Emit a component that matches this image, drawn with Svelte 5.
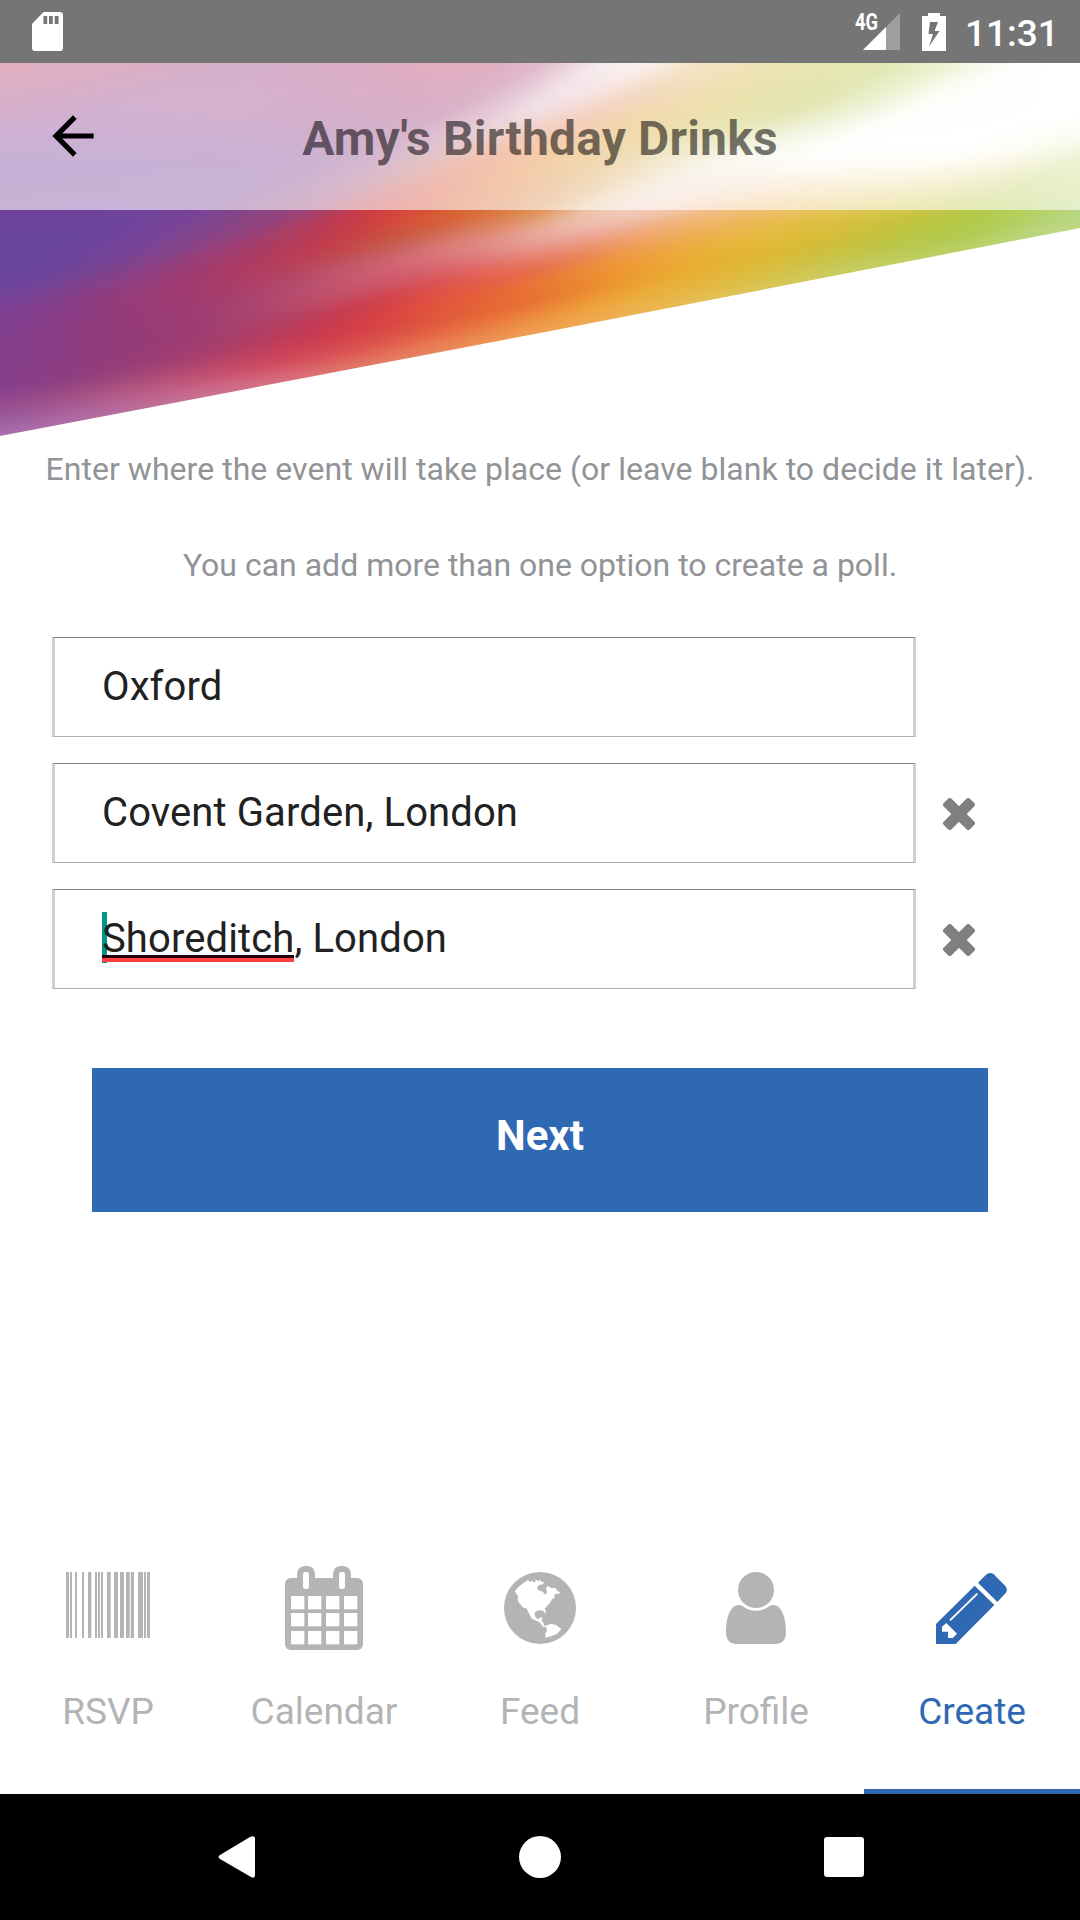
<script>
  // Colour samples of the hero artwork: y position, rise of the streaks below it, then [x, colour] stops.
  const rows = [
    [63, 0.58, [[0, 'b93761'], [150, 'a7396b'], [250, '96397f'], [350, 'a53470'], [450, 'b9325f'], [510, 'b33c68'], [550, 'b55a80'], [600, 'ebcdd7'], [650, 'f5deda'], [700, 'e6be75'], [800, 'cdbe3e'], [900, 'b4c846'], [950, 'd2e08c'], [1020, 'fcfef9'], [1080, 'ffffff']]],
    [110, 0.5, [[0, '9b397d'], [100, '903c8c'], [200, '964087'], [300, '983a80'], [400, '9e3873'], [450, 'a53c76'], [500, 'c47fa0'], [530, 'd9b4c0'], [560, 'e6a8a8'], [600, 'e38e61'], [680, 'dcaa2f'], [750, 'c0bb34'], [800, 'b9be41'], [860, 'd4e19d'], [910, 'fafcf4'], [1080, 'ffffff']]],
    [155, 0.5, [[0, '783c9b'], [150, '783c99'], [300, '7f3e8f'], [350, '8a4489'], [400, 'a35a89'], [450, 'c57060'], [500, 'e66a35'], [560, 'e38f26'], [620, 'dcab44'], [680, 'e1cf91'], [740, 'f3f1dc'], [820, 'ffffff'], [940, 'ffffff'], [1000, 'fcf7e6'], [1080, 'dce39f']]],
    [212, 0.36, [[0, '70429a'], [100, '6e449c'], [200, '78439a'], [260, '8a457f'], [300, '98437a'], [340, 'b73b55'], [360, 'c83a46'], [400, 'd6433a'], [440, 'db5a33'], [480, 'dc6b38'], [540, 'e09254'], [580, 'ecc2a0'], [620, 'f1cfbe'], [660, 'f2c7b0'], [700, 'f1bd88'], [760, 'eebb66'], [820, 'e3c150'], [880, 'd5c344'], [940, 'bfc541'], [980, 'b0c843'], [1020, 'b3cf57'], [1080, 'b7d684']]],
    [240, 0.32, [[0, '67459a'], [70, '68459c'], [140, '78449a'], [200, '86448a'], [250, 'a04072'], [300, 'b33b58'], [340, 'c83c48'], [380, 'c85040'], [420, 'cb6558'], [460, 'de8078'], [500, 'e29488'], [540, 'e9a8a0'], [580, 'eca090'], [620, 'f0a070'], [680, 'efac50'], [740, 'e6b83c'], [800, 'dcbb36'], [860, 'c8c03c'], [900, 'bac544'], [960, 'b0ca50'], [1020, 'bdd67c'], [1080, 'c5dc90']]],
    [270, 0.32, [[0, '67459b'], [60, '69459a'], [100, '7a4392'], [150, '8d4083'], [200, 'a03b70'], [250, 'b03a62'], [300, 'b94560'], [340, 'c0566c'], [380, 'd06070'], [420, 'd76070'], [460, 'de6060'], [500, 'e56a58'], [540, 'e66a48'], [580, 'ee8a38'], [640, 'eda030'], [700, 'e7b030'], [760, 'dcbc3c'], [800, 'cfc44c'], [840, 'c8cc60'], [1080, 'c8dc90']]],
    [300, 0.32, [[0, '75449c'], [50, '82418f'], [100, '903c80'], [150, '9a3b74'], [200, 'a03a70'], [250, 'aa4270'], [300, 'b84c6c'], [340, 'c44a60'], [380, 'd03c48'], [420, 'de4c40'], [460, 'e55c38'], [500, 'e66830'], [540, 'e87030'], [600, 'eea034'], [640, 'ecb044'], [720, 'e2c458'], [860, 'd0d070']]],
    [330, 0.3, [[0, '803f94'], [60, '8a3f86'], [120, '953a78'], [180, '993a74'], [240, 'a73f6c'], [300, 'bf3a58'], [340, 'd03848'], [400, 'dc4c44'], [440, 'e56440'], [500, 'ec8a48'], [540, 'f0a050'], [640, 'ecb85c']]],
    [360, 0.25, [[0, '82408f'], [60, '8a3e84'], [120, '963a78'], [180, 'a03f72'], [240, 'bf4464'], [280, 'cf4458'], [340, 'dd5c5c'], [380, 'e47860'], [460, 'ec9860']]],
    [390, 0.22, [[0, '82408f'], [60, '95457f'], [120, 'b05880'], [180, 'c46288'], [220, 'd07090'], [340, 'dd7878']]],
    [420, 0.2, [[0, '9455a0'], [50, 'aa68a4'], [140, 'b878a4']]],
    [440, 0.2, [[0, 'a870ac'], [80, 'b078a8']]]
  ].map(([y, slope, stops]) => [y, slope, stops.map(([x, hex]) => [x, [0, 2, 4].map((i) => parseInt(hex.slice(i, i + 2), 16))])]);

  const TOP = 63;
  const STRIP = 3;

  const mix = (a, b, t) => a.map((v, i) => v + (b[i] - v) * t);

  function along(stops, x) {
    if (x <= stops[0][0]) return stops[0][1];
    for (let i = 1; i < stops.length; i++) {
      if (x <= stops[i][0]) {
        const [x0, c0] = stops[i - 1];
        const [x1, c1] = stops[i];
        return mix(c0, c1, (x - x0) / (x1 - x0));
      }
    }
    return stops[stops.length - 1][1];
  }

  function colorAt(x, y) {
    let i = 1;
    while (i < rows.length - 1 && rows[i][0] < y) i++;
    const [y0, slope, r0] = rows[i - 1];
    const [y1, , r1] = rows[i];
    const c0 = along(r0, x + (y - y0) / slope);
    const c1 = along(r1, x - (y1 - y) / slope);
    return mix(c0, c1, (y - y0) / (y1 - y0));
  }

  // Averages neighbouring points along y so the rows blend softly; the header edge stays crisp.
  function softColor(x, y) {
    const taps = [-10, -5, 0, 5, 10].map((d) => colorAt(x - d * 1.5, Math.max(TOP, y + d)));
    const c = [0, 1, 2].map((k) => Math.round(taps.reduce((s, t) => s + t[k], 0) / taps.length));
    return `rgb(${c.join(' ')})`;
  }

  const strips = Array.from({ length: 125 }, (_, n) => {
    const y = TOP + n * STRIP + STRIP / 2;
    const stops = Array.from({ length: 55 }, (_, k) => softColor(k * 20, y) + ` ${k * 20}px`);
    return `linear-gradient(90deg, ${stops.join(', ')})`;
  });

  const places = [
    { text: 'Oxford', removable: false },
    { text: 'Covent Garden, London', removable: true },
    { marked: 'Shoreditch', text: ', London', removable: true }
  ];

  const bars = [[108, 9], [120, 6], [135, 6], [156, 6], [174, 10], [195, 6], [204, 6], [213, 6], [231, 11], [252, 12], [270, 12], [288, 11], [302, 10], [324, 15], [342, 6], [351, 9]];

  const cells = [168, 219, 273].flatMap((y) => [783, 834, 888, 942].map((x) => [x, y]));
</script>

<div class="screen">
  <div class="status">
    <svg class="sd" viewBox="0 0 31 39"><path fill="#fff" fill-rule="evenodd" d="M11.500 0H28a3 3 0 0 1 3 3v33a3 3 0 0 1-3 3H3a3 3 0 0 1-3-3V12zM11.500 4v8h3.700V4zm5.500 0v8h3.800V4zm5.700 0v8h3.800V4z" /></svg>
    <div class="right">
      <div class="signal">
        <svg viewBox="0 0 37 37"><path fill="#9f9f9f" d="M37 0v37H0z" /><path fill="#fff" d="M23 14v23H0z" /></svg>
        <span>4G</span>
      </div>
      <svg class="battery" viewBox="0 0 24 38"><path fill="#fff" fill-rule="evenodd" d="M6 0h12v3h6v35H0V3h6zM8 9L6.500 21h4.500L7 33.500 17.500 18H12.500L16 9z" /></svg>
      <span class="time">11:31</span>
    </div>
  </div>

  <div class="hero">
    <div class="art" aria-hidden="true">
      {#each strips as s}<div class="strip" style:background={s}></div>{/each}
    </div>
    <header>
      <svg class="back" viewBox="0 0 24 24"><path d="M20 11H7.830l5.590-5.590L12 4l-8 8 8 8 1.410-1.410L7.830 13H20z" /></svg>
      <h1>Amy's Birthday Drinks</h1>
    </header>
  </div>

  <main>
    <p class="hint first">Enter where the event will take place (or leave blank to decide it later).</p>
    <p class="hint">You can add more than one option to create a poll.</p>
    <div class="places">
      {#each places as p}
        <div class="place">
          <div class="field">
            {#if p.marked}<span class="marked">{p.marked}<i class="caret"></i></span>{/if}<span>{p.text}</span>
          </div>
          {#if p.removable}
            <svg class="remove" viewBox="-16 -16 32 32"><g transform="rotate(45)"><rect x="-18.500" y="-5.500" width="37" height="11" rx="2.500" /><rect x="-5.500" y="-18.500" width="11" height="37" rx="2.500" /></g></svg>
          {/if}
        </div>
      {/each}
    </div>
    <button class="next">Next</button>
  </main>

  <nav class="tabs">
    <div class="tab">
      <svg viewBox="99 69 270 270">{#each bars as [x, w]}<rect {x} y="96" width={w} height="198" />{/each}</svg>
      <span>RSVP</span>
    </div>
    <div class="tab">
      <svg viewBox="747 69 270 270">
        <rect x="765" y="114" width="234" height="216" rx="17" />
        <rect x="801" y="78" width="54" height="90" rx="24" />
        <rect x="909" y="78" width="54" height="90" rx="24" />
        <g fill="#fff">
          <rect x="819" y="96" width="18" height="51" rx="7" />
          <rect x="927" y="96" width="18" height="51" rx="7" />
          {#each cells as [x, y]}<rect {x} {y} width="40" height="40" />{/each}
        </g>
      </svg>
      <span>Calendar</span>
    </div>
    <div class="tab">
      <svg viewBox="75 69 270 270">
        <circle cx="210" cy="204" r="108" />
        <path fill="#fff" d="M134 154L146 140L163 127L174 121L182 126L188 121L190 127L197 126L196 117L205 124L211 120L216 127L223 125L219 133L206 136L201 143L204 150L218 155L226 164L231 157L228 147L232 137L244 144L256 144L262 152L273 159L256 163L252 168L256 172L246 178L240 188L233 196L224 206L228 214L226 222L221 213L208 211L197 214L194 223L197 233L205 238L211 232L218 233L214 244L220 247L222 258L232 256L243 251L258 255L274 266L262 281L246 288L226 293L226 281L231 272L229 262L219 260L209 247L195 241L184 235L178 222L169 205L160 203L148 190L143 180L144 168L138 160Z" />
      </svg>
      <span>Feed</span>
    </div>
    <div class="tab">
      <svg viewBox="723 69 270 270">
        <path d="M808 195C780 195 768 235 768 275C768 298 778 312 800 312H916C938 312 948 298 948 275C948 235 936 195 908 195Q903 195 900 197Q858 228 816 197Q813 195 808 195Z" />
        <circle cx="858" cy="150" r="54" />
      </svg>
      <span>Profile</span>
    </div>
    <div class="tab active">
      <svg viewBox="321 69 270 270">
        <path fill-rule="evenodd" d="M348 252L464 137L523 195L407 312H348ZM366 260V275H384V294H398L411 281L379 249ZM392 243L474 163L470 159L388 239Z" />
        <path d="M474 128L498 104Q509 94 521 103L556 138Q564 148 558 158L532 186Z" />
      </svg>
      <span>Create</span>
    </div>
  </nav>

  <div class="sysnav">
    <svg viewBox="-2 0 42 42"><path d="M3 19L33 1Q38-1 38 3V39Q38 43 34 41L3 23Q0 21 3 19Z" /></svg>
    <svg viewBox="0 0 42 42"><circle cx="21" cy="21" r="21" /></svg>
    <svg viewBox="0 0 42 42"><rect x="1" y="1" width="40" height="40" rx="3" /></svg>
  </div>
</div>

<style>
  :global(body) { margin: 0; background: #fff; }
  .screen { width: 1080px; height: 1920px; display: flex; flex-direction: column; overflow: hidden; background: #fff; font-family: Roboto, sans-serif; }
  svg { display: block; flex: none; }

  .status { height: 63px; flex: none; background: #757575; box-sizing: border-box; padding: 0 27px 0 32px; display: flex; justify-content: space-between; align-items: center; color: #fff; }
  .sd { width: 31px; height: 39px; }
  .right { display: flex; align-items: center; }
  .signal { position: relative; width: 37px; height: 37px; margin-right: 22px; }
  .signal svg { width: 37px; height: 37px; }
  .signal span { position: absolute; left: -8px; top: -2px; font-size: 23px; line-height: 24px; font-weight: 700; transform: scaleX(0.8); transform-origin: left; }
  .battery { width: 24px; height: 38px; margin-right: 19px; }
  .time { font-size: 37px; line-height: 44px; font-weight: 500; width: 88px; white-space: nowrap; padding-top: 5px; }

  .hero { position: relative; height: 375px; flex: none; }
  .art { position: absolute; inset: 0; clip-path: polygon(0 0, 100% 0, 100% 165px, 50% 270px, 0 373px); }
  .strip { height: 3px; }
  header { position: relative; height: 147px; background: rgba(255, 255, 255, 0.6); display: flex; align-items: center; justify-content: center; }
  .back { position: absolute; left: 42px; top: 42px; width: 62px; height: 62px; }
  h1 { margin: 4px 0 0; font-size: 48px; line-height: 56px; font-weight: 700; letter-spacing: 0.160px; color: rgba(0, 0, 0, 0.54); white-space: nowrap; }

  main { flex: 1; display: flex; flex-direction: column; align-items: center; }
  .hint { margin: 0 0 48px; font-size: 32px; line-height: 48px; color: #929397; white-space: nowrap; }
  .first { margin-top: 7px; letter-spacing: 0.035px; }
  .places { align-self: stretch; padding-left: 52px; display: flex; flex-direction: column; gap: 26px; }
  .place { display: flex; align-items: center; gap: 27px; }
  .field { width: 864px; height: 100px; box-sizing: border-box; border: solid; border-width: 1px 3px; border-color: #808080 #d0d0d0 #b0b0b0; padding: 0 47px; display: flex; align-items: center; font-size: 40px; line-height: 48px; letter-spacing: 0.110px; color: #212121; white-space: pre; }
  .marked { position: relative; z-index: 0; }
  .marked::after { content: ''; position: absolute; left: 0; right: 0; top: 40px; height: 4px; border-top: 3px solid #200008; background: #ff4040; }
  .caret { position: absolute; left: 0; top: -3px; width: 5px; height: 51px; background: #009788; z-index: -1; }
  .remove { width: 32px; height: 32px; margin-top: 2px; fill: #808080; }
  .next { margin: 79px 0 0; width: 896px; height: 144px; border: 0; padding: 0 0 8px; background: #3069b3; color: #fff; font: 700 42px/50px Roboto, sans-serif; }

  .tabs { height: 231px; flex: none; display: grid; grid-template-columns: repeat(5, 1fr); }
  .tab { display: flex; flex-direction: column; align-items: center; color: #b2b4b6; fill: #b2b4b6; font-size: 37px; line-height: 44px; }
  .tab svg { width: 90px; height: 90px; margin-bottom: 37px; }
  .active { color: #3069b3; fill: #3069b3; border-bottom: 5px solid #3069b3; }

  .sysnav { height: 126px; flex: none; background: #000; display: flex; align-items: center; justify-content: space-between; padding: 0 215px; fill: #fff; }
  .sysnav svg { width: 42px; height: 42px; }
</style>
